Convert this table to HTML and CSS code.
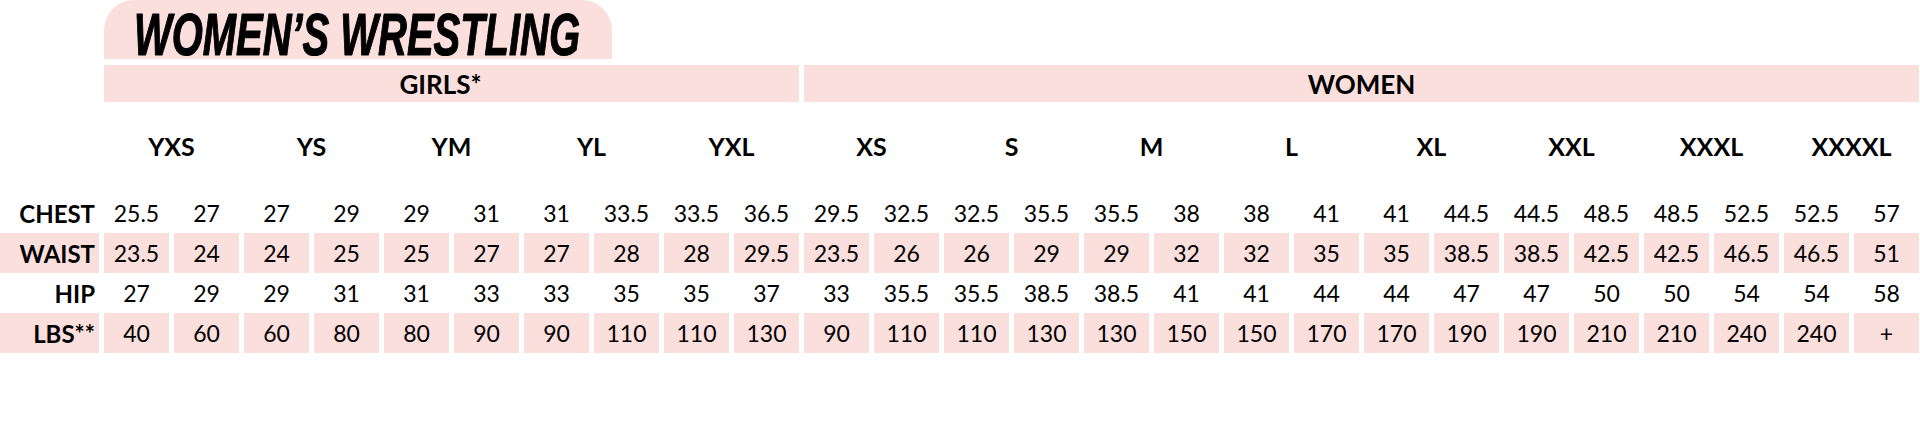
FILE: index.html
```html
<!DOCTYPE html>
<html lang="en">
<head>
<meta charset="utf-8">
<title>Women's Wrestling Size Chart</title>
<link rel="stylesheet" href="styles.css">
</head>
<body>
<div class="chart">
  <div class="tab">
    <svg class="title" width="508" height="59" viewBox="0 0 508 59" role="img" aria-label="WOMEN’S WRESTLING">
      <text x="30" y="55" textLength="446" lengthAdjust="spacingAndGlyphs">WOMEN’S WRESTLING</text>
    </svg>
  </div>
  <div class="grid">
    <div class="blank"></div>
    <div class="band band-girls">GIRLS*</div>
    <div class="band band-women">WOMEN</div>

    <div class="blank"></div>
    <div class="size">YXS</div><div class="size">YS</div><div class="size">YM</div><div class="size">YL</div><div class="size">YXL</div>
    <div class="size">XS</div><div class="size">S</div><div class="size">M</div><div class="size">L</div><div class="size">XL</div><div class="size">XXL</div><div class="size">XXXL</div><div class="size">XXXXL</div>

    <div class="label">CHEST</div>
    <div class="cell">25.5</div><div class="cell">27</div><div class="cell">27</div><div class="cell">29</div><div class="cell">29</div><div class="cell">31</div><div class="cell">31</div><div class="cell">33.5</div><div class="cell">33.5</div><div class="cell">36.5</div>
    <div class="cell">29.5</div><div class="cell">32.5</div><div class="cell">32.5</div><div class="cell">35.5</div><div class="cell">35.5</div><div class="cell">38</div><div class="cell">38</div><div class="cell">41</div><div class="cell">41</div><div class="cell">44.5</div><div class="cell">44.5</div><div class="cell">48.5</div><div class="cell">48.5</div><div class="cell">52.5</div><div class="cell">52.5</div><div class="cell">57</div>

    <div class="label shade">WAIST</div>
    <div class="cell shade">23.5</div><div class="cell shade">24</div><div class="cell shade">24</div><div class="cell shade">25</div><div class="cell shade">25</div><div class="cell shade">27</div><div class="cell shade">27</div><div class="cell shade">28</div><div class="cell shade">28</div><div class="cell shade">29.5</div>
    <div class="cell shade">23.5</div><div class="cell shade">26</div><div class="cell shade">26</div><div class="cell shade">29</div><div class="cell shade">29</div><div class="cell shade">32</div><div class="cell shade">32</div><div class="cell shade">35</div><div class="cell shade">35</div><div class="cell shade">38.5</div><div class="cell shade">38.5</div><div class="cell shade">42.5</div><div class="cell shade">42.5</div><div class="cell shade">46.5</div><div class="cell shade">46.5</div><div class="cell shade">51</div>

    <div class="label">HIP</div>
    <div class="cell">27</div><div class="cell">29</div><div class="cell">29</div><div class="cell">31</div><div class="cell">31</div><div class="cell">33</div><div class="cell">33</div><div class="cell">35</div><div class="cell">35</div><div class="cell">37</div>
    <div class="cell">33</div><div class="cell">35.5</div><div class="cell">35.5</div><div class="cell">38.5</div><div class="cell">38.5</div><div class="cell">41</div><div class="cell">41</div><div class="cell">44</div><div class="cell">44</div><div class="cell">47</div><div class="cell">47</div><div class="cell">50</div><div class="cell">50</div><div class="cell">54</div><div class="cell">54</div><div class="cell">58</div>

    <div class="label shade">LBS**</div>
    <div class="cell shade">40</div><div class="cell shade">60</div><div class="cell shade">60</div><div class="cell shade">80</div><div class="cell shade">80</div><div class="cell shade">90</div><div class="cell shade">90</div><div class="cell shade">110</div><div class="cell shade">110</div><div class="cell shade">130</div>
    <div class="cell shade">90</div><div class="cell shade">110</div><div class="cell shade">110</div><div class="cell shade">130</div><div class="cell shade">130</div><div class="cell shade">150</div><div class="cell shade">150</div><div class="cell shade">170</div><div class="cell shade">170</div><div class="cell shade">190</div><div class="cell shade">190</div><div class="cell shade">210</div><div class="cell shade">210</div><div class="cell shade">240</div><div class="cell shade">240</div><div class="cell shade">+</div>
  </div>
</div>
</body>
</html>
```

FILE: styles.css
```css
html, body {
  margin: 0;
  padding: 0;
  background: #ffffff;
}

body {
  font-family: Lato, "Open Sans", "Liberation Sans", sans-serif;
  color: #000000;
  width: 1920px;
  height: 421px;
  overflow: hidden;
}

.chart {
  display: flex;
  flex-direction: column;
}

.tab {
  margin-left: 104px;
  width: 508px;
  height: 59px;
  background: #fbdfdd;
  border-radius: 30px 30px 0 0;
}

.title {
  display: block;
  overflow: visible;
}

.title text {
  font-family: "Liberation Sans", "DejaVu Sans", sans-serif;
  font-weight: 700;
  font-style: italic;
  font-size: 60px;
  fill: #000000;
  stroke: #000000;
  stroke-width: 1.2px;
  stroke-linejoin: round;
}

.grid {
  margin-top: 6px;
  width: 1919px;
  display: grid;
  grid-template-columns: 99px repeat(26, 65px);
  grid-template-rows: 37px 91px 40px 40px 40px 40px;
  column-gap: 5px;
}

.band {
  background: #fbdfdd;
  font-weight: 700;
  font-size: 26px;
  display: flex;
  align-items: center;
  justify-content: center;
}

.band-girls {
  grid-column: span 10;
  padding-right: 22px;
}

.band-women {
  grid-column: span 16;
}

.size {
  grid-column: span 2;
  font-weight: 700;
  font-size: 25px;
  display: flex;
  align-items: center;
  justify-content: center;
  padding-bottom: 4px;
}

.label {
  font-weight: 700;
  font-size: 24px;
  display: flex;
  align-items: center;
  justify-content: flex-end;
  padding-right: 4px;
}

.cell {
  font-size: 23px;
  display: flex;
  align-items: center;
  justify-content: center;
}

.shade {
  background: #fbdfdd;
}
```
